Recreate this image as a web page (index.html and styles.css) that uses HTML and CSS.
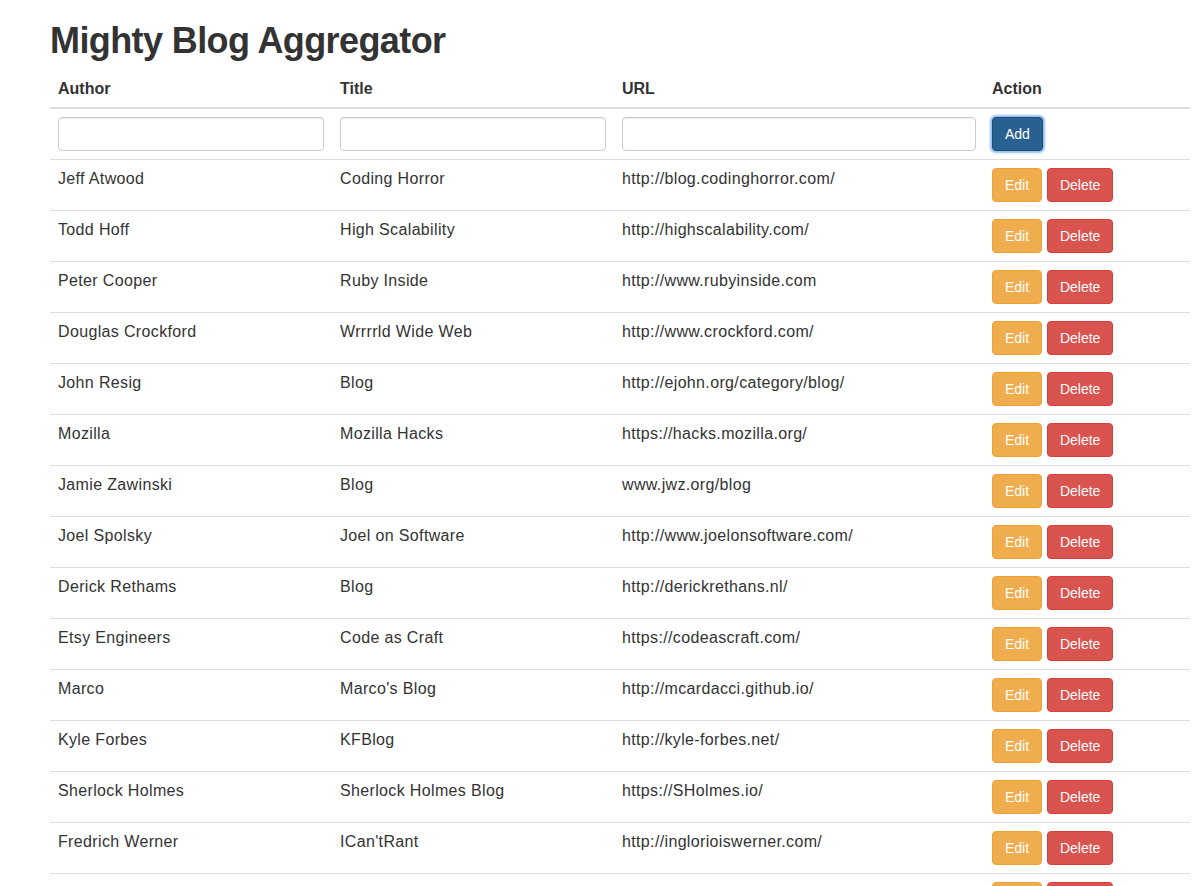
FILE: index.html
```html
<!DOCTYPE html>
<html>
<head>
<meta charset="utf-8">
<title>Mighty Blog Aggregator</title>
<link rel="stylesheet" href="styles.css">
</head>
<body>
<div class="page">
  <h1 class="title">Mighty Blog Aggregator</h1>
  <table class="blogs">
    <colgroup>
      <col class="c-author"><col class="c-title"><col class="c-url"><col class="c-action">
    </colgroup>
    <thead>
      <tr><th>Author</th><th>Title</th><th>URL</th><th>Action</th></tr>
    </thead>
    <tbody>
      <tr>
        <td><input class="field" type="text"></td>
        <td><input class="field" type="text"></td>
        <td><input class="field" type="text"></td>
        <td><button class="btn btn-add">Add</button></td>
      </tr>
      <tr><td>Jeff Atwood</td><td>Coding Horror</td><td>http://blog.codinghorror.com/</td><td><button class="btn btn-edit">Edit</button> <button class="btn btn-delete">Delete</button></td></tr>
      <tr><td>Todd Hoff</td><td>High Scalability</td><td>http://highscalability.com/</td><td><button class="btn btn-edit">Edit</button> <button class="btn btn-delete">Delete</button></td></tr>
      <tr><td>Peter Cooper</td><td>Ruby Inside</td><td>http://www.rubyinside.com</td><td><button class="btn btn-edit">Edit</button> <button class="btn btn-delete">Delete</button></td></tr>
      <tr><td>Douglas Crockford</td><td>Wrrrrld Wide Web</td><td>http://www.crockford.com/</td><td><button class="btn btn-edit">Edit</button> <button class="btn btn-delete">Delete</button></td></tr>
      <tr><td>John Resig</td><td>Blog</td><td>http://ejohn.org/category/blog/</td><td><button class="btn btn-edit">Edit</button> <button class="btn btn-delete">Delete</button></td></tr>
      <tr><td>Mozilla</td><td>Mozilla Hacks</td><td>https://hacks.mozilla.org/</td><td><button class="btn btn-edit">Edit</button> <button class="btn btn-delete">Delete</button></td></tr>
      <tr><td>Jamie Zawinski</td><td>Blog</td><td>www.jwz.org/blog</td><td><button class="btn btn-edit">Edit</button> <button class="btn btn-delete">Delete</button></td></tr>
      <tr><td>Joel Spolsky</td><td>Joel on Software</td><td>http://www.joelonsoftware.com/</td><td><button class="btn btn-edit">Edit</button> <button class="btn btn-delete">Delete</button></td></tr>
      <tr><td>Derick Rethams</td><td>Blog</td><td>http://derickrethans.nl/</td><td><button class="btn btn-edit">Edit</button> <button class="btn btn-delete">Delete</button></td></tr>
      <tr><td>Etsy Engineers</td><td>Code as Craft</td><td>https://codeascraft.com/</td><td><button class="btn btn-edit">Edit</button> <button class="btn btn-delete">Delete</button></td></tr>
      <tr><td>Marco</td><td>Marco's Blog</td><td>http://mcardacci.github.io/</td><td><button class="btn btn-edit">Edit</button> <button class="btn btn-delete">Delete</button></td></tr>
      <tr><td>Kyle Forbes</td><td>KFBlog</td><td>http://kyle-forbes.net/</td><td><button class="btn btn-edit">Edit</button> <button class="btn btn-delete">Delete</button></td></tr>
      <tr><td>Sherlock Holmes</td><td>Sherlock Holmes Blog</td><td>https://SHolmes.io/</td><td><button class="btn btn-edit">Edit</button> <button class="btn btn-delete">Delete</button></td></tr>
      <tr><td>Fredrich Werner</td><td>ICan'tRant</td><td>http://inglorioiswerner.com/</td><td><button class="btn btn-edit">Edit</button> <button class="btn btn-delete">Delete</button></td></tr>
      <tr><td></td><td></td><td></td><td><button class="btn btn-edit">Edit</button> <button class="btn btn-delete">Delete</button></td></tr>
    </tbody>
  </table>
</div>
</body>
</html>
```
FILE: styles.css
```css
html, body {
  margin: 0;
  padding: 0;
  background: #fff;
}
body {
  font-family: "Liberation Sans", Arial, sans-serif;
  font-size: 14px;
  line-height: 1.42857143;
  color: #333;
}
.page {
  padding-left: 50px;
  width: 1140px;
}
.title {
  margin: 21px 0 10px;
  font-size: 36px;
  font-weight: bold;
  letter-spacing: -0.6px;
  line-height: 1.1;
  color: #333;
}
.blogs {
  width: 1140px;
  border-collapse: collapse;
  border-spacing: 0;
  table-layout: fixed;
  font-size: 16px;
}
.c-author, .c-title { width: 282px; }
.c-url { width: 370px; }
.c-action { width: 206px; }
.blogs th {
  text-align: left;
  font-weight: bold;
  line-height: 20px;
  padding: 8px;
  vertical-align: bottom;
  border-bottom: 2px solid #ddd;
}
.blogs td {
  padding: 8px;
  vertical-align: top;
  letter-spacing: 0.35px;
  line-height: 1.42857143;
  border-top: 1px solid #ddd;
}
.blogs tbody tr:first-child td {
  border-top: 0;
}
.field {
  display: block;
  box-sizing: border-box;
  width: 100%;
  height: 34px;
  margin: 0;
  padding: 6px 12px;
  font: inherit;
  border: 1px solid #ccc;
  border-radius: 4px;
  background: #fff;
  box-shadow: inset 0 1px 1px rgba(0,0,0,.075);
}
.btn {
  display: inline-block;
  box-sizing: border-box;
  margin: 0;
  padding: 6px 12px;
  font-family: "Liberation Sans", Arial, sans-serif;
  font-size: 14px;
  letter-spacing: 0;
  line-height: 20px;
  color: #fff;
  border: 1px solid transparent;
  border-radius: 4px;
  vertical-align: middle;
  cursor: pointer;
}
.btn-add {
  background: #286090;
  border-color: #204d74;
  box-shadow: 0 0 2px 2px rgba(120, 175, 240, .8);
}
.btn-edit {
  background: #f0ad4e;
  border-color: #eea236;
}
.btn-delete {
  background: #d9534f;
  border-color: #d43f3a;
}
```
